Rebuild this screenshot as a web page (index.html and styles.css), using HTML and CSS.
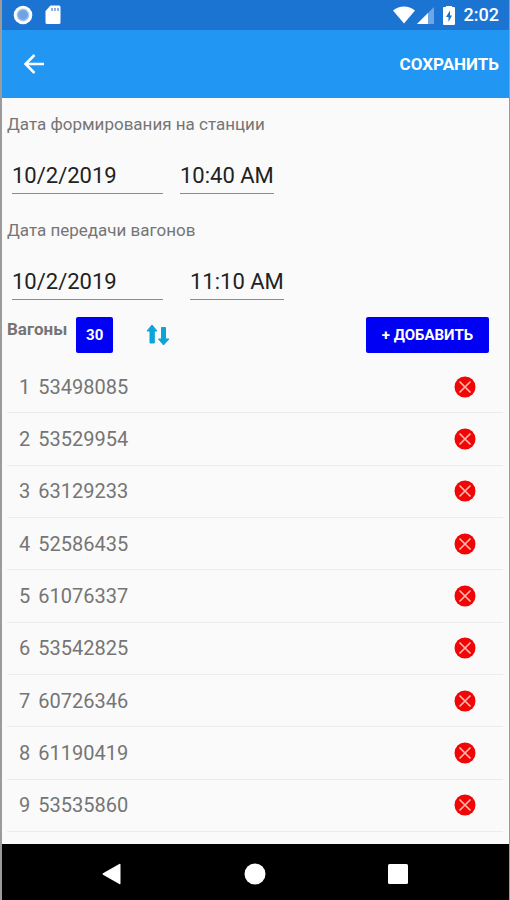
FILE: index.html
```
<!DOCTYPE html>
<html lang="ru">
<head>
<meta charset="utf-8">
<meta name="viewport" content="width=device-width, initial-scale=1">
<title>Вагоны</title>
<link rel="stylesheet" href="styles.css">
</head>
<body>
<svg class="sprite" aria-hidden="true">
  <symbol id="remove" viewBox="0 0 22 22">
    <circle cx="11" cy="11" r="10.5" fill="#f00606"/>
    <path d="M5.5 5.5l11 11M16.5 5.5l-11 11" stroke="#ffb4a8" stroke-width="1.7" fill="none"/>
  </symbol>
</svg>
<div class="status">
  <svg width="20" height="20" viewBox="0 0 20 20"><circle cx="10" cy="10" r="9.3" fill="#fff"/><circle cx="10" cy="10" r="5.7" fill="#6fa3e2" stroke="#a9c8f0" stroke-width="1.4"/></svg>
  <svg class="card" width="16" height="20" viewBox="0 0 16 20"><path d="M5.5.5H14a1.5 1.5 0 0 1 1.500 1.500v15.500a1.500 1.500 0 0 1-1.500 1.500H2A1.500 1.500 0 0 1 .5 17.500V6z" fill="#fff"/><path d="M7 3v3M10 3v3M13 3v3" stroke="#6b9bd8" stroke-width="1.500"/></svg>
  <span class="spacer"></span>
  <svg width="22" height="18" viewBox="0 0 22 18"><path d="M0 4.500C6.500-.8 15.500-.8 22 4.500L11 17.500z" fill="#fff"/></svg>
  <svg class="signal" width="17" height="17" viewBox="0 0 17 17"><path d="M17 0v17H0z" fill="#6ea7e6"/><path d="M11 6v11H0z" fill="#fff"/></svg>
  <svg class="battery" width="12" height="19" viewBox="0 0 12 19"><path d="M3 0h6v1H11a1 1 0 0 1 1 1v16a1 1 0 0 1-1 1H1a1 1 0 0 1-1-1V2a1 1 0 0 1 1-1h2z" fill="#fff"/><path d="M7 4.500L3 11h2.500v5L9 9.500H7z" fill="#1b70cc"/></svg>
  <span class="clock">2:02</span>
</div>
<header class="appbar">
  <button class="icon-button" aria-label="Назад"><svg width="20" height="20" viewBox="0 0 20 20"><path d="M20 10H2M10.500 1L1.500 10l9 9" fill="none" stroke="#fff" stroke-width="2.500"/></svg></button>
  <button class="save">СОХРАНИТЬ</button>
</header>
<main class="content">
  <label class="caption" for="form-date">Дата формирования на станции</label>
  <div class="fields">
    <input class="date" id="form-date" value="10/2/2019">
    <input class="time" aria-label="Время формирования" value="10:40 AM">
  </div>
  <label class="caption" for="send-date">Дата передачи вагонов</label>
  <div class="fields fields-wide">
    <input class="date" id="send-date" value="10/2/2019">
    <input class="time" aria-label="Время передачи" value="11:10 AM">
  </div>
  <div class="toolbar">
    <h2 class="heading">Вагоны</h2>
    <button class="blue count">30</button>
    <button class="icon-button sort" aria-label="Сортировать"><svg width="24" height="24" viewBox="0 0 24 24" fill="#0ba5d8" stroke="#0ba5d8" stroke-width="1" stroke-linejoin="round"><path d="M6 2l5 6H8.300v12H4V8H1z"/><path d="M17.500 22L12.500 16h3V4.500h4V16h3.500z"/></svg></button>
    <button class="blue add">+ ДОБАВИТЬ</button>
  </div>
  <ol class="wagons">
    <li><span class="index">1</span><span>53498085</span><button class="icon-button remove" aria-label="Удалить 53498085"><svg width="22" height="22"><use href="#remove"/></svg></button></li>
    <li><span class="index">2</span><span>53529954</span><button class="icon-button remove" aria-label="Удалить 53529954"><svg width="22" height="22"><use href="#remove"/></svg></button></li>
    <li><span class="index">3</span><span>63129233</span><button class="icon-button remove" aria-label="Удалить 63129233"><svg width="22" height="22"><use href="#remove"/></svg></button></li>
    <li><span class="index">4</span><span>52586435</span><button class="icon-button remove" aria-label="Удалить 52586435"><svg width="22" height="22"><use href="#remove"/></svg></button></li>
    <li><span class="index">5</span><span>61076337</span><button class="icon-button remove" aria-label="Удалить 61076337"><svg width="22" height="22"><use href="#remove"/></svg></button></li>
    <li><span class="index">6</span><span>53542825</span><button class="icon-button remove" aria-label="Удалить 53542825"><svg width="22" height="22"><use href="#remove"/></svg></button></li>
    <li><span class="index">7</span><span>60726346</span><button class="icon-button remove" aria-label="Удалить 60726346"><svg width="22" height="22"><use href="#remove"/></svg></button></li>
    <li><span class="index">8</span><span>61190419</span><button class="icon-button remove" aria-label="Удалить 61190419"><svg width="22" height="22"><use href="#remove"/></svg></button></li>
    <li><span class="index">9</span><span>53535860</span><button class="icon-button remove" aria-label="Удалить 53535860"><svg width="22" height="22"><use href="#remove"/></svg></button></li>
  </ol>
</main>
<nav class="navbar">
  <button class="icon-button" aria-label="Назад"><svg width="22" height="22" viewBox="0 0 22 22"><path d="M19.500 1.500v19a.8.8 0 0 1-1.200.6L2 11.700a.8.8 0 0 1 0-1.400L18.300.900a.8.8 0 0 1 1.200.6z" fill="#fff"/></svg></button>
  <button class="icon-button" aria-label="Домой"><svg width="22" height="22" viewBox="0 0 22 22"><circle cx="11" cy="11" r="10.500" fill="#fff"/></svg></button>
  <button class="icon-button" aria-label="Обзор"><svg width="22" height="22" viewBox="0 0 22 22"><rect x="1" y="1" width="20" height="20" rx="1.500" fill="#fff"/></svg></button>
</nav>
</body>
</html>
```
FILE: styles.css
```
* {
  box-sizing: border-box;
}

body {
  margin: 0;
  min-height: 100vh;
  display: flex;
  flex-direction: column;
  border: solid #9b9b9b;
  border-width: 0 1px 0 2px;
  background: #fafafa;
  color: #757575;
  font-family: Roboto, "Liberation Sans", sans-serif;
}

button,
input {
  margin: 0;
  padding: 0;
  border: 0;
  background: none;
  font: inherit;
  color: inherit;
}

svg {
  display: block;
}

.sprite {
  position: absolute;
  width: 0;
  height: 0;
}

.icon-button {
  display: flex;
  align-items: center;
  justify-content: center;
}

.status {
  display: flex;
  align-items: center;
  height: 30px;
  padding: 0 10px 0 11px;
  background: #1c74d2;
  color: #fff;
}

.card {
  margin-left: 12px;
}

.spacer {
  flex: 1;
}

.signal {
  margin-left: 2px;
}

.battery {
  margin-left: 9px;
}

.clock {
  margin-left: 9px;
  font-size: 18px;
  font-weight: 500;
  line-height: 30px;
}

.appbar {
  display: flex;
  align-items: center;
  justify-content: space-between;
  height: 68px;
  padding: 0 10px 0 22px;
  background: #2196f3;
  color: #fff;
}

.save {
  font-size: 17px;
  font-weight: 700;
}

.content {
  flex: 1;
  display: flex;
  flex-direction: column;
  padding: 12px 6px 12px 5px;
}

.caption {
  font-size: 17px;
  line-height: 28px;
}

.fields {
  display: flex;
  gap: 17px;
  height: 56px;
  margin-bottom: 22px;
  padding: 20px 5px 0;
}

.fields-wide {
  gap: 27px;
  margin-bottom: 17px;
}

.fields input {
  height: 36px;
  border-bottom: 1px solid #8c8c8c;
  color: #222;
  font-size: 22px;
}

.date {
  width: 151px;
}

.time {
  width: 94px;
}

.toolbar {
  display: flex;
  align-items: center;
  height: 36px;
  margin-bottom: 8px;
}

.heading {
  align-self: flex-start;
  margin: 0;
  font-size: 17px;
  font-weight: 700;
  line-height: 24px;
}

.blue {
  height: 36px;
  border-radius: 2px;
  background: #0000f5;
  color: #fff;
  font-size: 15px;
  font-weight: 700;
}

.count {
  width: 37px;
  margin-left: 9px;
}

.sort {
  margin-left: 33px;
}

.add {
  width: 123px;
  margin: 0 14px 0 auto;
}

.wagons {
  flex: 1;
  display: grid;
  grid-auto-rows: 1fr;
  margin: 0;
  padding: 0;
  list-style: none;
}

.wagons li {
  display: flex;
  align-items: center;
  gap: 8px;
  min-height: 44px;
  padding: 0 27px 0 12px;
  border-bottom: 1px solid #ececec;
  font-size: 20px;
}

.remove {
  margin-left: auto;
}

.navbar {
  display: flex;
  align-items: center;
  justify-content: center;
  gap: 121px;
  height: 56px;
  margin: 0 -1px 0 -2px;
  padding-top: 3px;
  background: #000;
}
```
